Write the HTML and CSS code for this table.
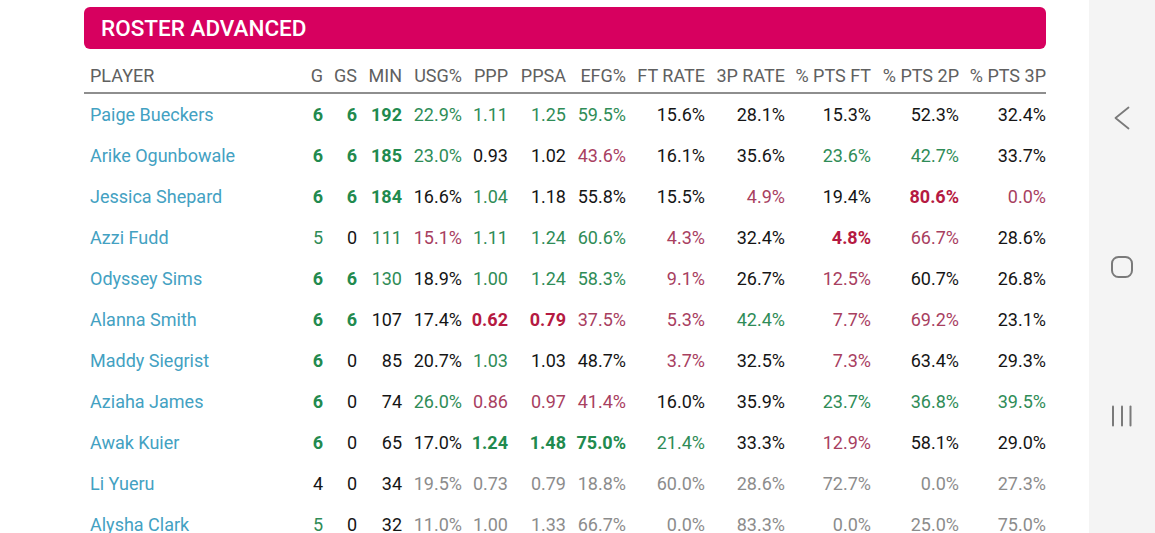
FILE: index.html
```html
<!DOCTYPE html>
<html lang="en">
<head>
<meta charset="utf-8">
<title>Roster Advanced</title>
<link rel="stylesheet" href="styles.css">
</head>
<body>
<div class="screen">
  <main class="content">
    <div class="title-bar">ROSTER ADVANCED</div>
    <table class="roster">
      <colgroup>
        <col class="c-player"><col class="c-34"><col class="c-34"><col class="c-45"><col class="c-60"><col class="c-46"><col class="c-58"><col class="c-60"><col class="c-79"><col class="c-80"><col class="c-86"><col class="c-88"><col class="c-87">
      </colgroup>
      <thead>
        <tr>
          <th class="name-h">PLAYER</th><th>G</th><th>GS</th><th>MIN</th><th>USG%</th><th>PPP</th><th>PPSA</th><th>EFG%</th><th>FT RATE</th><th>3P RATE</th><th>% PTS FT</th><th>% PTS 2P</th><th>% PTS 3P</th>
        </tr>
      </thead>
      <tbody>
        <tr>
          <td class="name">Paige Bueckers</td><td class="gb">6</td><td class="gb">6</td><td class="gb">192</td><td class="g">22.9%</td><td class="g">1.11</td><td class="g">1.25</td><td class="g">59.5%</td><td>15.6%</td><td>28.1%</td><td>15.3%</td><td>52.3%</td><td>32.4%</td>
        </tr>
        <tr>
          <td class="name">Arike Ogunbowale</td><td class="gb">6</td><td class="gb">6</td><td class="gb">185</td><td class="g">23.0%</td><td>0.93</td><td>1.02</td><td class="r">43.6%</td><td>16.1%</td><td>35.6%</td><td class="g">23.6%</td><td class="g">42.7%</td><td>33.7%</td>
        </tr>
        <tr>
          <td class="name">Jessica Shepard</td><td class="gb">6</td><td class="gb">6</td><td class="gb">184</td><td>16.6%</td><td class="g">1.04</td><td>1.18</td><td>55.8%</td><td>15.5%</td><td class="r">4.9%</td><td>19.4%</td><td class="rb">80.6%</td><td class="r">0.0%</td>
        </tr>
        <tr>
          <td class="name">Azzi Fudd</td><td class="g">5</td><td>0</td><td class="g">111</td><td class="r">15.1%</td><td class="g">1.11</td><td class="g">1.24</td><td class="g">60.6%</td><td class="r">4.3%</td><td>32.4%</td><td class="rb">4.8%</td><td class="r">66.7%</td><td>28.6%</td>
        </tr>
        <tr>
          <td class="name">Odyssey Sims</td><td class="gb">6</td><td class="gb">6</td><td class="g">130</td><td>18.9%</td><td class="g">1.00</td><td class="g">1.24</td><td class="g">58.3%</td><td class="r">9.1%</td><td>26.7%</td><td class="r">12.5%</td><td>60.7%</td><td>26.8%</td>
        </tr>
        <tr>
          <td class="name">Alanna Smith</td><td class="gb">6</td><td class="gb">6</td><td>107</td><td>17.4%</td><td class="rb">0.62</td><td class="rb">0.79</td><td class="r">37.5%</td><td class="r">5.3%</td><td class="g">42.4%</td><td class="r">7.7%</td><td class="r">69.2%</td><td>23.1%</td>
        </tr>
        <tr>
          <td class="name">Maddy Siegrist</td><td class="gb">6</td><td>0</td><td>85</td><td>20.7%</td><td class="g">1.03</td><td>1.03</td><td>48.7%</td><td class="r">3.7%</td><td>32.5%</td><td class="r">7.3%</td><td>63.4%</td><td>29.3%</td>
        </tr>
        <tr>
          <td class="name">Aziaha James</td><td class="gb">6</td><td>0</td><td>74</td><td class="g">26.0%</td><td class="r">0.86</td><td class="r">0.97</td><td class="r">41.4%</td><td>16.0%</td><td>35.9%</td><td class="g">23.7%</td><td class="g">36.8%</td><td class="g">39.5%</td>
        </tr>
        <tr>
          <td class="name">Awak Kuier</td><td class="gb">6</td><td>0</td><td>65</td><td>17.0%</td><td class="gb">1.24</td><td class="gb">1.48</td><td class="gb">75.0%</td><td class="g">21.4%</td><td>33.3%</td><td class="r">12.9%</td><td>58.1%</td><td>29.0%</td>
        </tr>
        <tr>
          <td class="name">Li Yueru</td><td>4</td><td>0</td><td>34</td><td class="m">19.5%</td><td class="m">0.73</td><td class="m">0.79</td><td class="m">18.8%</td><td class="m">60.0%</td><td class="m">28.6%</td><td class="m">72.7%</td><td class="m">0.0%</td><td class="m">27.3%</td>
        </tr>
        <tr>
          <td class="name">Alysha Clark</td><td class="g">5</td><td>0</td><td>32</td><td class="m">11.0%</td><td class="m">1.00</td><td class="m">1.33</td><td class="m">66.7%</td><td class="m">0.0%</td><td class="m">83.3%</td><td class="m">0.0%</td><td class="m">25.0%</td><td class="m">75.0%</td>
        </tr>
      </tbody>
    </table>
  </main>
  <nav class="navbar">
    <svg class="nav-icon" viewBox="0 0 24 24" width="24" height="24"><polyline points="18.5,1.5 5.5,12 18.5,22.5" fill="none" stroke="#7a7a7a" stroke-width="1.8" stroke-linecap="round" stroke-linejoin="round"/></svg>
    <svg class="nav-icon" viewBox="0 0 24 24" width="24" height="24"><rect x="2" y="2" width="20" height="20" rx="6.5" fill="none" stroke="#7a7a7a" stroke-width="2"/></svg>
    <svg class="nav-icon" viewBox="0 0 24 24" width="24" height="24"><g stroke="#7a7a7a" stroke-width="2" stroke-linecap="round"><line x1="3" y1="2.5" x2="3" y2="21.5"/><line x1="12" y1="2.5" x2="12" y2="21.5"/><line x1="20.5" y1="2.5" x2="20.5" y2="21.5"/></g></svg>
  </nav>
</div>
</body>
</html>
```

FILE: styles.css
```css
html, body {
  margin: 0;
  padding: 0;
  height: 100%;
  overflow: hidden;
  background: #ffffff;
}

body {
  font-family: Roboto, "Liberation Sans", Arial, sans-serif;
  color: #151515;
}

.screen {
  display: flex;
  height: 533px;
}

.content {
  flex: 1;
  padding: 7px 0 0 84px;
  overflow: hidden;
}

.title-bar {
  width: 962px;
  height: 42px;
  box-sizing: border-box;
  background: #d7005f;
  border-radius: 6px;
  color: #ffffff;
  font-size: 22.5px;
  font-weight: 500;
  line-height: 43px;
  padding-left: 17px;
}

.roster {
  margin-top: 9px;
  width: 962px;
  border-collapse: collapse;
  table-layout: fixed;
  font-size: 18px;
}

.c-player { width: 205px; }
.c-34 { width: 34px; }
.c-45 { width: 45px; }
.c-46 { width: 46px; }
.c-58 { width: 58px; }
.c-60 { width: 60px; }
.c-79 { width: 79px; }
.c-80 { width: 80px; }
.c-86 { width: 86px; }
.c-87 { width: 87px; }
.c-88 { width: 88px; }

.roster th {
  height: 34px;
  padding: 0;
  text-align: right;
  font-weight: 400;
  color: #606060;
  white-space: nowrap;
  border-bottom: 2px solid #8e8e8e;
  vertical-align: middle;
}

.roster th.name-h {
  text-align: left;
  padding-left: 6px;
}

.roster td {
  height: 41px;
  padding: 0;
  text-align: right;
  white-space: nowrap;
  vertical-align: middle;
}

.roster td.name {
  text-align: left;
  padding-left: 6px;
  color: #43a1c2;
}

.g { color: #2f8c57; }
.gb { color: #218a4e; font-weight: 700; }
.r { color: #a8405f; }
.rb { color: #b51a42; font-weight: 700; }
.m { color: #8c8c8c; }

.navbar {
  width: 66px;
  flex: none;
  background: #f4f4f4;
  display: flex;
  flex-direction: column;
  align-items: center;
  justify-content: center;
  gap: 125px;
}

.nav-icon {
  display: block;
}
```
